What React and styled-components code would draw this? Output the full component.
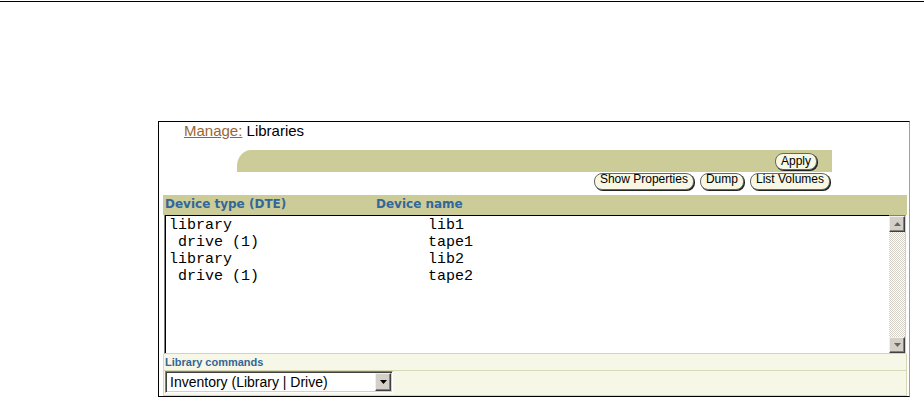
import React from "react";
import styled, { createGlobalStyle } from "styled-components";

const GlobalStyle = createGlobalStyle`
	html, body {
		margin: 0;
		padding: 0;
		background: #fff;
	}
	body {
		font-family: "Liberation Sans", Arial, sans-serif;
		color: #000;
	}
`;

const TopRule = styled.div`
	height: 1px;
	margin-top: 1px;
	background: #000;
`;

const Frame = styled.div`
	box-sizing: border-box;
	width: 752px;
	height: 276px;
	margin: 119px 0 0 158px;
	border: 1px solid #000;
	border-right-color: #a0a0a0;
`;

const Breadcrumb = styled.div`
	height: 17px;
	padding-left: 25px;
	font-size: 15px;
	line-height: 17px;
`;

const CrumbLink = styled.a`
	color: #996633;
	text-decoration: underline;
`;

const ActionBar = styled.div`
	box-sizing: border-box;
	display: flex;
	align-items: center;
	justify-content: flex-end;
	width: 595px;
	height: 22px;
	margin: 11px 0 0 78px;
	padding-right: 15px;
	background: #cccc99;
	border-top-left-radius: 14px 16px;
`;

const ButtonRow = styled.div`
	box-sizing: border-box;
	display: flex;
	justify-content: flex-end;
	gap: 6px;
	width: 595px;
	height: 17px;
	margin: 1px 0 0 78px;
	padding-right: 2px;
`;

const PillButton = styled.button`
	box-sizing: border-box;
	height: 17px;
	padding: 0 5px ${(p) => (p.$high ? "4px" : "0")};
	border: 1px solid #666;
	border-radius: 8px;
	box-shadow: 1px 1px 0 #222;
	background: #f7f7e4;
	color: #000;
	font: 12px "Liberation Sans", Arial, sans-serif;
	line-height: 11px;
	white-space: nowrap;
`;

const Panel = styled.div`
	margin: 5px 2px 0 4px;
`;

const HeaderBar = styled.div`
	display: grid;
	grid-template-columns: 211px 1fr;
	height: 20px;
	padding-left: 2px;
	background: #cccc99;
	color: #336699;
	font: bold 12px "DejaVu Sans", Verdana, sans-serif;
	line-height: 19px;
`;

const ListBox = styled.div`
	box-sizing: border-box;
	display: flex;
	height: 139px;
	margin: 0 1px;
	border: 1px solid;
	border-color: #808080 #d4d0c8 #d4d0c8 #808080;
	background: #fff;
`;

const ListContent = styled.div`
	flex: 1;
	padding: 1px 0 0 3px;
	border-left: 1px solid #000;
	border-top: 1px solid #000;
	margin-top: -1px;
`;

const ListRow = styled.div`
	display: grid;
	grid-template-columns: 259px 1fr;
	font: 15px "Liberation Mono", "Courier New", monospace;
	line-height: 17px;
	white-space: pre;
`;

const ScrollTrack = styled.div`
	display: flex;
	flex-direction: column;
	justify-content: space-between;
	width: 16px;
	background: repeating-conic-gradient(#d4d0c8 0 25%, #fff 0 50%) 0 0 / 2px 2px;
`;

const BevelButton = styled.div`
	box-sizing: border-box;
	display: flex;
	align-items: center;
	justify-content: center;
	width: ${(p) => p.$w || 16}px;
	height: ${(p) => p.$h || 16}px;
	background: #d4d0c8;
	border: 1px solid;
	border-color: #f0f0f0 #404040 #404040 #f0f0f0;
	box-shadow: inset -1px -1px 0 #808080;
`;

const CommandArea = styled.div`
	background: #f7f7e7;
	border: 1px solid #d8d8b4;
	border-top: none;
`;

const CommandLabel = styled.div`
	box-sizing: border-box;
	height: 17px;
	padding: 1px 0 0 1px;
	border-bottom: 1px solid #d8d8b4;
	color: #336699;
	font: bold 11px "Liberation Sans", Arial, sans-serif;
	line-height: 15px;
`;

const SelectRow = styled.div`
	height: 24px;
	padding-left: 1px;
`;

const SelectBox = styled.div`
	box-sizing: border-box;
	display: flex;
	align-items: stretch;
	width: 228px;
	height: 22px;
	padding: 1px;
	border: 1px solid;
	border-color: #808080 #fff #fff #808080;
	box-shadow: inset 1px 1px 0 #404040, inset -1px -1px 0 #d4d0c8;
	background: #fff;
`;

const SelectText = styled.div`
	flex: 1;
	padding-left: 3px;
	font-size: 14px;
	line-height: 19px;
	white-space: nowrap;
`;

const Arrow = ({ up, color }) => (
	<svg width="7" height="4" viewBox="0 0 7 4">
		<polygon points={up ? "3.5,0 7,4 0,4" : "0,0 7,0 3.5,4"} fill={color} />
	</svg>
);

const devices = [
	{ type: "library", name: "lib1" },
	{ type: " drive (1)", name: "tape1" },
	{ type: "library", name: "lib2" },
	{ type: " drive (1)", name: "tape2" },
];

export default function App() {
	return (
		<>
			<GlobalStyle />
			<TopRule />
			<Frame>
				<Breadcrumb>
					<CrumbLink href="#">Manage:</CrumbLink> Libraries
				</Breadcrumb>
				<ActionBar>
					<PillButton>Apply</PillButton>
				</ActionBar>
				<ButtonRow>
					<PillButton $high>Show Properties</PillButton>
					<PillButton $high>Dump</PillButton>
					<PillButton $high>List Volumes</PillButton>
				</ButtonRow>
				<Panel>
					<HeaderBar>
						<span>Device type (DTE)</span>
						<span>Device name</span>
					</HeaderBar>
					<ListBox>
						<ListContent>
							{devices.map((d, i) => (
								<ListRow key={i}>
									<span>{d.type}</span>
									<span>{d.name}</span>
								</ListRow>
							))}
						</ListContent>
						<ScrollTrack>
							<BevelButton>
								<Arrow up color="#666" />
							</BevelButton>
							<BevelButton>
								<Arrow color="#666" />
							</BevelButton>
						</ScrollTrack>
					</ListBox>
					<CommandArea>
						<CommandLabel>Library commands</CommandLabel>
						<SelectRow>
							<SelectBox>
								<SelectText>Inventory (Library | Drive)</SelectText>
								<BevelButton $h={18}>
									<Arrow color="#000" />
								</BevelButton>
							</SelectBox>
						</SelectRow>
					</CommandArea>
				</Panel>
			</Frame>
		</>
	);
}
